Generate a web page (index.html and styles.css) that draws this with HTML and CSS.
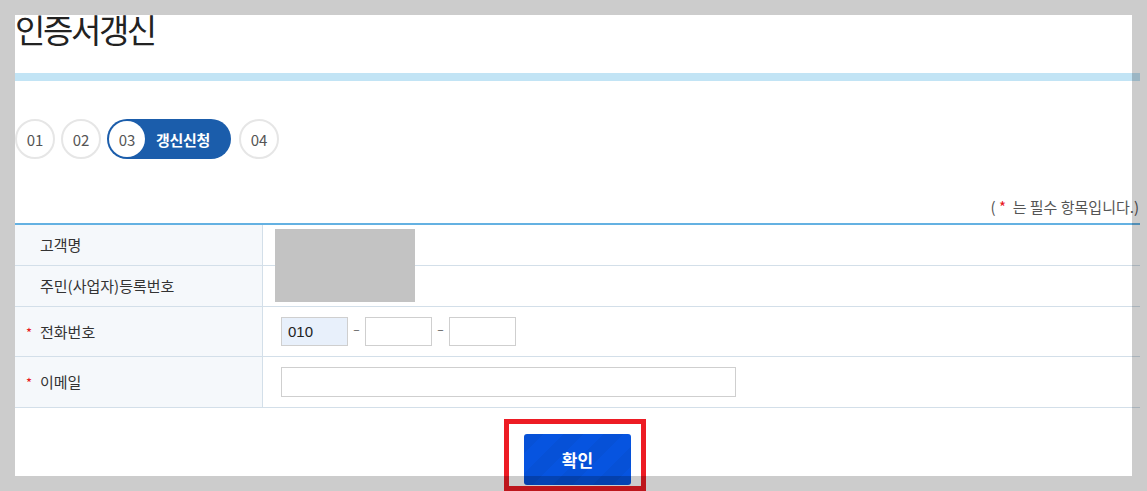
FILE: index.html
```html
<html>
<head>
<meta charset="UTF-8">
<link rel="stylesheet" href="styles.css">
</head>
<body>
<div class="page">
  <h1 class="title">인증서갱신</h1>
  <div class="bar"></div>

  <ul class="steps">
    <li class="step">01</li>
    <li class="step">02</li>
    <li class="step on"><span class="num">03</span><span class="name">갱신신청</span></li>
    <li class="step">04</li>
  </ul>

  <p class="note">( <span class="star">*</span>&nbsp; 는 필수 항목입니다.)</p>

  <div class="form">
    <table class="tbl">
      <tr class="short">
        <th>고객명</th>
        <td></td>
      </tr>
      <tr class="short">
        <th>주민(사업자)등록번호</th>
        <td></td>
      </tr>
      <tr class="mid">
        <th><span class="req">*</span>전화번호</th>
        <td>
          <input class="tel first" type="text" value="010"><span class="dash">–</span><input class="tel" type="text"><span class="dash">–</span><input class="tel" type="text">
        </td>
      </tr>
      <tr class="tall">
        <th><span class="req">*</span>이메일</th>
        <td><input class="mail" type="text"></td>
      </tr>
    </table>
    <div class="mask"></div>
  </div>

  <div class="btns">
    <div class="mark"><button class="ok">확인</button></div>
  </div>
</div>
<div class="frame"></div>
</body>
</html>
```

FILE: styles.css
```css
body {
  margin: 0;
  background: white;
  font-family: "Noto Sans CJK KR", "Noto Sans", sans-serif;
  color: #333;
  overflow: hidden;
}
.page {
  width: 1125px;
  margin-left: 15px;
}
.title {
  margin: 9px 0 0 0;
  font-size: 33px;
  font-weight: normal;
  line-height: 40px;
  letter-spacing: -2.4px;
  color: #222;
}
.bar {
  height: 8px;
  margin-top: 24px;
  background: #c2e4f5;
}

/* steps */
.steps {
  list-style: none;
  margin: 38px 0 0 0;
  padding: 0;
  display: flex;
  gap: 6px;
}
.step {
  width: 36px;
  height: 36px;
  border: 2px solid #e6e6e6;
  border-radius: 50%;
  display: flex;
  align-items: center;
  justify-content: center;
  font-size: 15px;
  color: #555;
  background: white;
}
.step.on {
  width: 124px;
  height: 40px;
  border: 0;
  border-radius: 20px;
  background: #1b5dab;
  justify-content: flex-start;
  margin-right: 2px;
}
.step.on .num {
  width: 36px;
  height: 36px;
  margin-left: 2px;
  border-radius: 50%;
  background: white;
  display: flex;
  align-items: center;
  justify-content: center;
}
.step.on .name {
  margin-left: 11px;
  color: white;
  font-weight: bold;
  font-size: 15px;
  letter-spacing: -0.3px;
}

/* note */
.note {
  margin: 38px 0 0 0;
  text-align: right;
  font-size: 15px;
  line-height: 20px;
  color: #555;
  padding-right: 1px;
}
.star, .req {
  color: #e8141b;
}

/* table */
.form {
  position: relative;
  margin-top: 6px;
}
.tbl {
  width: 100%;
  border-collapse: collapse;
  border-top: 2px solid #64b1e2;
  font-size: 15px;
}
.tbl th {
  width: 221px;
  padding-left: 25px;
  text-align: left;
  font-weight: normal;
  color: #333;
  background: #f5f8fb;
  border-right: 1px solid #d3dfe9;
  border-bottom: 1px solid #d3dfe9;
}
.tbl td {
  padding-left: 18px;
  border-bottom: 1px solid #d3dfe9;
}
.tbl tr.short { height: 41px; }
.tbl tr.mid { height: 50px; }
.tbl tr.tall { height: 51px; }
.req {
  display: inline-block;
  width: 14px;
  margin-left: -14px;
  font-size: 13px;
}
.tel {
  width: 67px;
  height: 29px;
  box-sizing: border-box;
  border: 1px solid #cfcfcf;
  padding: 0 6px;
  font-size: 15px;
  font-family: "Liberation Sans", sans-serif;
  color: #222;
  vertical-align: middle;
}
.tel.first {
  background: #e8f0fb;
}
.dash {
  display: inline-block;
  width: 17px;
  text-align: center;
  font-size: 12px;
  color: #555;
  vertical-align: middle;
  position: relative;
  top: -3px;
}
.mail {
  width: 455px;
  height: 30px;
  box-sizing: border-box;
  border: 1px solid #cfcfcf;
  vertical-align: middle;
}
.mask {
  position: absolute;
  left: 260px;
  top: 6px;
  width: 140px;
  height: 73px;
  background: #c3c3c3;
}

/* button */
.btns {
  margin-top: 11px;
  display: flex;
  justify-content: center;
  padding-right: 5px;
}
.mark {
  border: 5px solid #ed1c24;
  padding: 10px 10px 1px 15px;
}
.ok {
  display: block;
  width: 107px;
  height: 51px;
  border: 0;
  border-radius: 3px;
  background: #0654e0;
  background-image:
    linear-gradient(135deg, rgba(0,0,0,0.04) 25%, transparent 25%, transparent 50%, rgba(0,0,0,0.04) 50%, rgba(0,0,0,0.04) 75%, transparent 75%);
  background-size: 40px 40px;
  color: white;
  font-family: "Noto Sans CJK KR", sans-serif;
  font-size: 17px;
  font-weight: bold;
}

.frame {
  position: fixed;
  left: 0;
  top: 0;
  right: 0;
  bottom: 0;
  border: 15px solid rgba(0,0,0,0.2);
  pointer-events: none;
}
```
